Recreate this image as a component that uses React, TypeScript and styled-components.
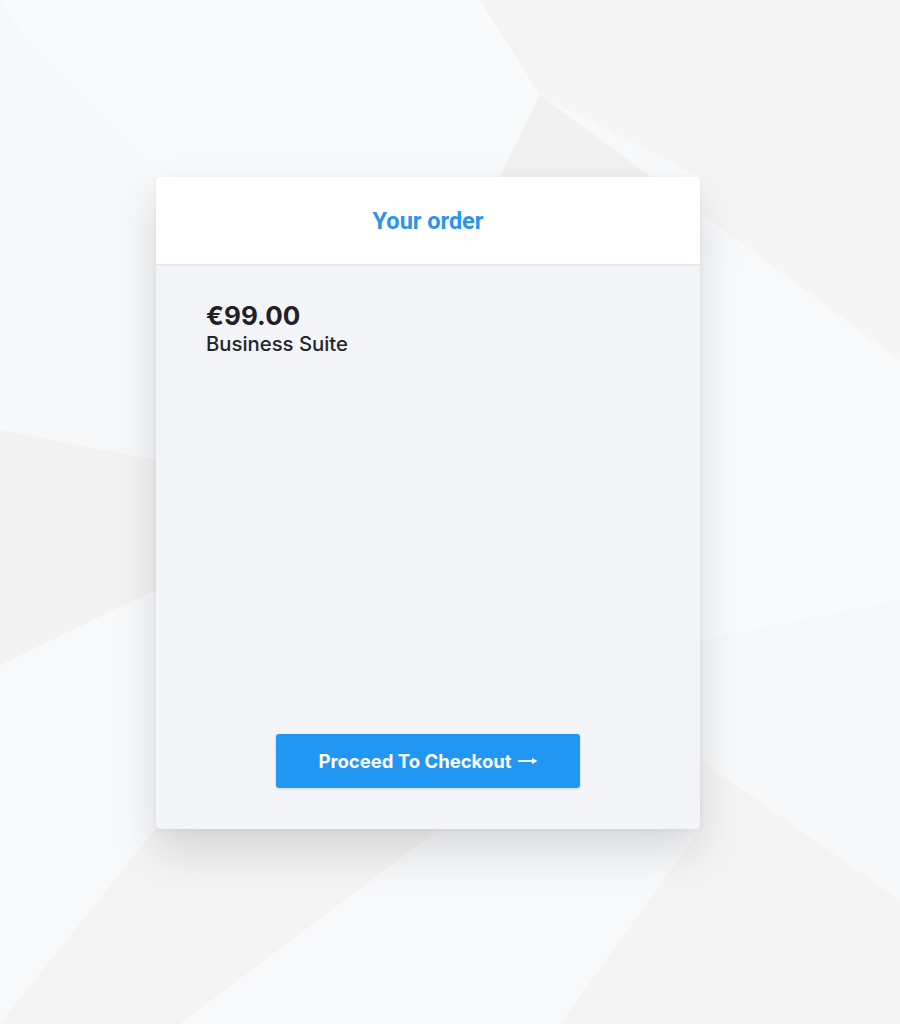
import React from 'react';
import styled, { createGlobalStyle } from 'styled-components';

const GlobalStyle = createGlobalStyle`
    html, body {
        margin: 0;
        padding: 0;
        background: #f6f7f9;
        font-family: Inter, "Liberation Sans", sans-serif;
    }
    * { box-sizing: border-box; }
`;

const Page = styled.div`
    position: relative;
    width: 900px;
    height: 1024px;
    overflow: hidden;
    padding: 177px 0 0 156px;
`;

const Backdrop = styled.svg`
    position: absolute;
    inset: 0;
    z-index: 0;
`;

const Card = styled.section`
    position: relative;
    z-index: 1;
    width: 544px;
    height: 652px;
    border-radius: 5px;
    background: #f4f5f9;
    box-shadow: 0 22px 45px rgba(0, 0, 0, 0.13), 0 2px 6px rgba(0, 0, 0, 0.05);
    display: flex;
    flex-direction: column;
    overflow: hidden;
`;

const Header = styled.header`
    height: 88px;
    background: #ffffff;
    border-bottom: 1px solid #e2e4e8;
    box-shadow: 0 1px 2px rgba(0, 0, 0, 0.04);
    display: flex;
    align-items: center;
    justify-content: center;

    h2 {
        margin: 0;
        font-family: Roboto, "Liberation Sans", sans-serif;
        font-size: 23.5px;
        font-weight: 700;
        color: #2a95e8;
        padding-top: 0;
    }
`;

const Body = styled.div`
    flex: 1;
    display: flex;
    flex-direction: column;
    padding: 36px 50px 41px;
`;

const Price = styled.div`
    font-size: 26px;
    font-weight: 700;
    color: #1f2126;
    line-height: 30px;
    letter-spacing: 0.1px;
`;

const Product = styled.div`
    font-size: 20.3px;
    font-weight: 500;
    color: #23252a;
    line-height: 24px;
    margin-top: 1px;
`;

const CheckoutButton = styled.button`
    margin: auto auto 0;
    width: 304px;
    height: 54px;
    border: none;
    border-radius: 3px;
    background: #2196f3;
    color: #ffffff;
    font-family: Inter, "Liberation Sans", sans-serif;
    font-size: 18.5px;
    font-weight: 700;
    cursor: pointer;
    box-shadow: 0 1px 3px rgba(0, 0, 0, 0.12);
    display: flex;
    align-items: center;
    justify-content: center;
    gap: 6px;
`;

const polys: [string, string][] = [
    ['0,0 30,45 0,120', '#f7f8fa'],
    ['0,0 480,0 540,95 30,45', '#f9fafb'],
    ['480,0 900,0 540,95', '#f4f4f4'],
    ['540,95 900,0 900,360', '#f5f5f5'],
    ['30,45 540,95 500,177 156,177', '#f8f9fb'],
    ['540,95 700,177 500,177', '#f1f1f1'],
    ['0,120 30,45 156,177 156,460 0,430', '#f7f8fa'],
    ['540,95 900,360 700,250 700,177', '#f8f9fa'],
    ['700,250 900,360 900,600 700,640', '#f9fafb'],
    ['0,430 156,460 156,590 0,665', '#f3f3f3'],
    ['0,665 156,590 156,829 0,1024', '#f8f9fb'],
    ['700,640 900,600 900,900 700,760', '#f7f8fa'],
    ['700,760 900,900 900,1024 560,1024 700,829', '#f4f4f4'],
    ['156,829 440,829 180,1024 0,1024', '#f4f4f5'],
    ['440,829 700,829 560,1024 180,1024', '#f8f9fb'],
];

function LowPolyBackground() {
    return (
        <Backdrop width="900" height="1024" viewBox="0 0 900 1024">
            <rect width="900" height="1024" fill="#f6f7f9" />
            {polys.map(([points, fill], i) => (
                <polygon key={i} points={points} fill={fill} />
            ))}
        </Backdrop>
    );
}

function ArrowRight() {
    return (
        <svg width="20" height="10" viewBox="0 0 20 10">
            <path d="M0 5 H15" stroke="#fff" strokeWidth="1.8" />
            <path d="M14 2 L19.5 5 L14 8 Z" fill="#fff" />
        </svg>
    );
}

export default function App() {
    return (
        <>
            <GlobalStyle />
            <Page>
                <LowPolyBackground />
                <Card>
                    <Header>
                        <h2>Your order</h2>
                    </Header>
                    <Body>
                        <Price>€99.00</Price>
                        <Product>Business Suite</Product>
                        <CheckoutButton>
                            Proceed To Checkout <ArrowRight />
                        </CheckoutButton>
                    </Body>
                </Card>
            </Page>
        </>
    );
}
